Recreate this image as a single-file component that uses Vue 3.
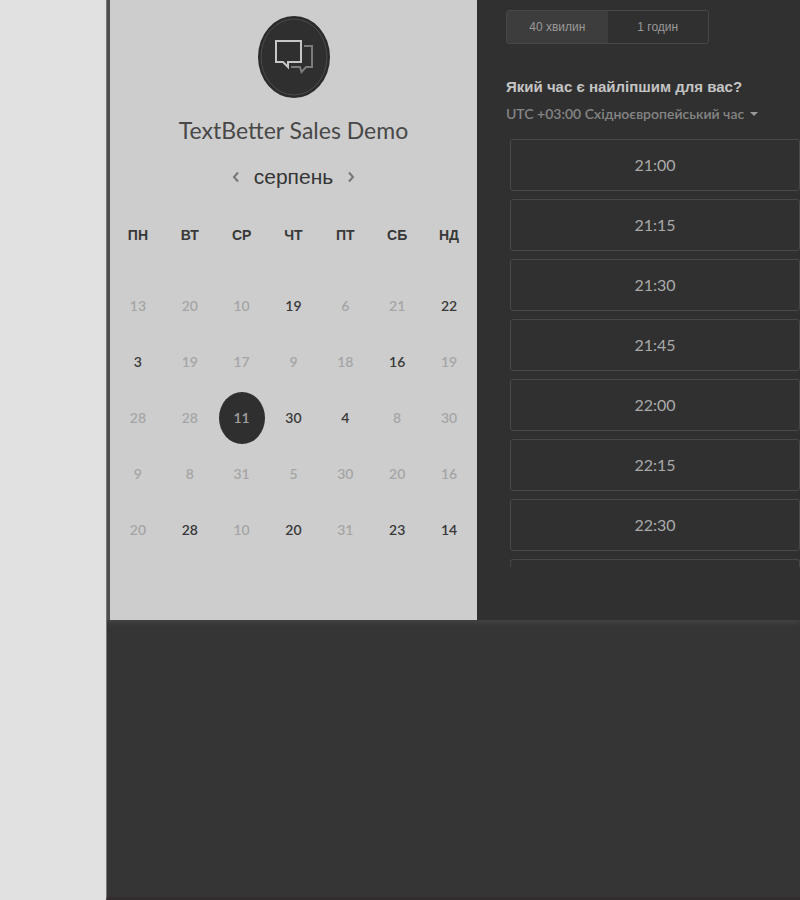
<script setup>
import { ref } from 'vue'

const weekdays = ['ПН', 'ВТ', 'СР', 'ЧТ', 'ПТ', 'СБ', 'НД']
const open = (n) => ({ n, free: true })
const shut = (n) => ({ n, free: false })
const weeks = [
  [shut(13), shut(20), shut(10), open(19), shut(6), shut(21), open(22)],
  [open(3), shut(19), shut(17), shut(9), shut(18), open(16), shut(19)],
  [shut(28), shut(28), open(11), open(30), open(4), shut(8), shut(30)],
  [shut(9), shut(8), shut(31), shut(5), shut(30), shut(20), shut(16)],
  [shut(20), open(28), shut(10), open(20), shut(31), open(23), open(14)],
]
const selected = ref('2-2')
const duration = ref(0)
const durations = ['40 хвилин', '1 годин']
const zone = ref('eet')
const times = ['21:00', '21:15', '21:30', '21:45', '22:00', '22:15', '22:30']
</script>

<template>
  <div class="page">
    <main class="content">
      <div class="booking">
        <section class="calendar">
          <svg class="logo" viewBox="0 0 72 82" aria-hidden="true">
            <ellipse cx="36" cy="41" rx="36" ry="41" fill="#2b2b2b" />
            <ellipse cx="36" cy="41" rx="33" ry="38" fill="#2f2f2f" stroke="#4c4c4c" stroke-width="1" />
            <path d="M46 30H54V51H48L43.500 56L42 51H33" fill="none" stroke="#7c7c7c" stroke-width="2" />
            <path d="M18 25H43V46H30V51L25 46H18Z" fill="#2f2f2f" stroke="#c6c6c6" stroke-width="2" />
          </svg>
          <h1 class="title">TextBetter Sales Demo</h1>
          <div class="month">
            <button type="button" class="arrow" aria-label="Попередній місяць">
              <svg viewBox="0 0 8 12"><path d="M6 1.500L2 6L6 10.500" /></svg>
            </button>
            <h2 class="month-name">серпень</h2>
            <button type="button" class="arrow" aria-label="Наступний місяць">
              <svg viewBox="0 0 8 12"><path d="M2 1.500L6 6L2 10.500" /></svg>
            </button>
          </div>
          <table class="days">
            <thead>
              <tr><th v-for="d in weekdays" :key="d" scope="col">{{ d }}</th></tr>
            </thead>
            <tbody>
              <tr v-for="(week, w) in weeks" :key="w">
                <td v-for="(day, i) in week" :key="i">
                  <button
                    type="button"
                    class="day"
                    :class="{ free: day.free, selected: selected === w + '-' + i }"
                    :disabled="!day.free"
                    @click="selected = w + '-' + i"
                  >{{ day.n }}</button>
                </td>
              </tr>
            </tbody>
          </table>
        </section>

        <section class="slots">
          <div class="durations">
            <button
              v-for="(d, i) in durations"
              :key="d"
              type="button"
              class="duration"
              :class="{ active: duration === i }"
              @click="duration = i"
            >{{ d }}</button>
          </div>
          <h2 class="question">Який час є найліпшим для вас?</h2>
          <div class="zone">
            <select v-model="zone" class="zone-select" aria-label="Часовий пояс">
              <option value="eet">UTC +03:00 Східноєвропейський час</option>
            </select>
            <svg class="caret" viewBox="0 0 8 4" aria-hidden="true"><path d="M0 0H8L4 4Z" /></svg>
          </div>
          <div class="times">
            <button v-for="t in times" :key="t" type="button" class="time">{{ t }}</button>
            <div class="time-edge"></div>
          </div>
        </section>
      </div>
    </main>
  </div>
</template>

<style>
body {
  margin: 0;
  background: #353535;
}
</style>

<style scoped>
.page {
  box-sizing: border-box;
  min-height: 100vh;
  display: flex;
  padding-left: 106px;
  background: #e1e1e1;
  font-family: "Liberation Sans", Arial, sans-serif;
}
.content {
  box-sizing: border-box;
  flex: 1;
  min-width: 0;
  background: #353535;
  border-left: 1px solid #777777;
  border-bottom: 3px solid #322c2e;
}
.booking {
  display: flex;
  min-height: 620px;
  border-left: 3px solid #4d4d4d;
  box-shadow: 0 2px 6px #484848;
  clip-path: inset(0 0 -10px 0);
}
button {
  margin: 0;
  padding: 0;
  border: 0;
  background: none;
  font: inherit;
  color: inherit;
  cursor: pointer;
}
.calendar {
  box-sizing: border-box;
  flex: 0 0 367px;
  padding: 16px 2px 0;
  background: #cdcdcd;
  display: flex;
  flex-direction: column;
  align-items: center;
}
.logo {
  width: 72px;
  height: 82px;
}
.title {
  margin: 16px 0 0;
  font: 400 23px/32px Lato, sans-serif;
  color: #484848;
}
.month {
  margin-top: 15px;
  display: flex;
  align-items: center;
  gap: 14px;
}
.month-name {
  margin: 0;
  font-size: 21px;
  font-weight: 400;
  line-height: 32px;
  color: #353535;
}
.arrow {
  display: flex;
}
.arrow svg {
  width: 8px;
  height: 12px;
  fill: none;
  stroke: #777777;
  stroke-width: 2;
}
.days {
  width: 100%;
  margin-top: 26px;
  table-layout: fixed;
  border-collapse: collapse;
}
.days th {
  height: 32px;
  padding: 0 0 27px;
  font-size: 14px;
  line-height: 32px;
  color: #383838;
}
.days td {
  height: 56px;
  padding: 0;
  text-align: center;
}
.day {
  width: 46px;
  height: 52px;
  border-radius: 50%;
  font: 600 14px/52px Lato, sans-serif;
  color: #a5a5a5;
}
.day.free {
  color: #383838;
}
.day.selected {
  background: #2f2f2f;
  color: #a0a0a0;
}
.slots {
  box-sizing: border-box;
  flex: 1;
  min-width: 0;
  padding: 10px 0 0 29px;
  background: #303030;
}
.durations {
  box-sizing: border-box;
  width: 203px;
  height: 34px;
  display: flex;
  border: 1px solid #484848;
  border-radius: 3px;
  overflow: hidden;
}
.duration {
  flex: 1;
  font-size: 12px;
  color: #999999;
}
.duration.active {
  background: #3d3d3d;
}
.question {
  margin: 31px 0 0;
  font-size: 15px;
  line-height: 24px;
  color: #c4c4c4;
}
.zone {
  display: flex;
  align-items: center;
  gap: 6px;
  height: 30px;
}
.zone-select {
  appearance: none;
  field-sizing: content;
  margin: 0;
  padding: 0;
  border: 0;
  background: none;
  font: 600 14px/20px Lato, "Liberation Sans", sans-serif;
  color: #858585;
}
.caret {
  width: 8px;
  height: 4px;
  fill: #999999;
}
.times {
  margin-left: 4px;
  padding-top: 10px;
  display: flex;
  flex-direction: column;
  gap: 8px;
}
.time {
  box-sizing: border-box;
  height: 52px;
  border: 1px solid #484848;
  border-radius: 3px;
  font: 400 16px/24px Lato, sans-serif;
  color: #aaaaaa;
}
.time-edge {
  box-sizing: border-box;
  height: 8px;
  border: 1px solid #484848;
  border-bottom: 0;
  border-radius: 3px 3px 0 0;
}
</style>
